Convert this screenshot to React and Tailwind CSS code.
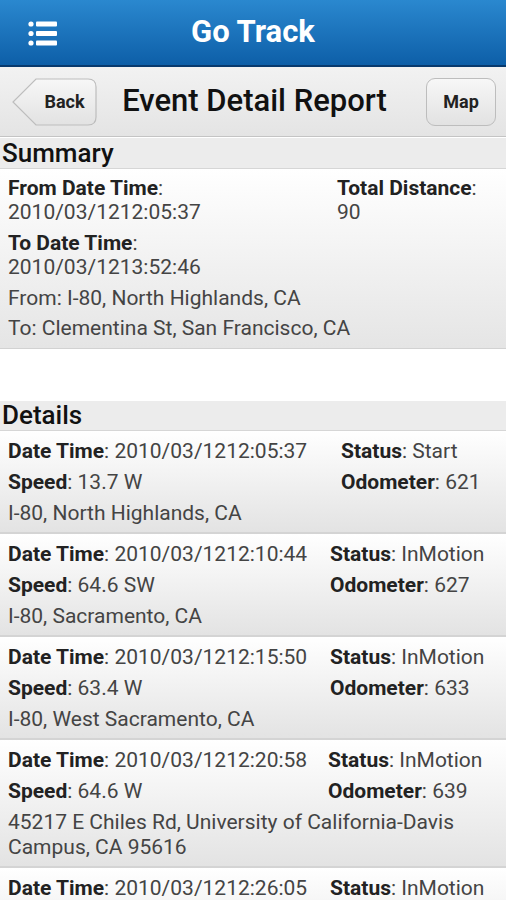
const font = { fontFamily: 'Roboto, "Noto Sans", sans-serif' }

const rows = [
  { dt: '2010/03/1212:05:37', status: 'Start', speed: '13.7 W', odo: '621', addr: ['I-80, North Highlands, CA'], col: 'grid-cols-[333px_1fr]' },
  { dt: '2010/03/1212:10:44', status: 'InMotion', speed: '64.6 SW', odo: '627', addr: ['I-80, Sacramento, CA'], col: 'grid-cols-[322px_1fr]' },
  { dt: '2010/03/1212:15:50', status: 'InMotion', speed: '63.4 W', odo: '633', addr: ['I-80, West Sacramento, CA'], col: 'grid-cols-[322px_1fr]' },
  { dt: '2010/03/1212:20:58', status: 'InMotion', speed: '64.6 W', odo: '639', addr: ['45217 E Chiles Rd, University of California-Davis', 'Campus, CA 95616'], col: 'grid-cols-[320px_1fr]' },
  { dt: '2010/03/1212:26:05', status: 'InMotion', speed: '64.6 W', odo: '645', addr: ['I-80, Davis, CA'], col: 'grid-cols-[322px_1fr]' },
]

function Field({ label, value }) {
  return (
    <div className="whitespace-nowrap">
      <span className="font-bold text-[#222]">{label}</span>
      <span className="text-[#444]">: {value}</span>
    </div>
  )
}

function MenuIcon() {
  return (
    <svg width="30" height="27" viewBox="0 0 30 27">
      <circle cx="3" cy="4" r="2.6" fill="white" />
      <circle cx="3" cy="13.5" r="2.6" fill="white" />
      <circle cx="3" cy="23" r="2.6" fill="white" />
      <rect x="8" y="1.5" width="21" height="5" rx="1" fill="white" />
      <rect x="8" y="11" width="21" height="5" rx="1" fill="white" />
      <rect x="8" y="20.5" width="21" height="5" rx="1" fill="white" />
    </svg>
  )
}

function BackButton() {
  return (
    <button className="relative w-[85px] h-[48px] flex items-center justify-center pl-[22px] pr-[2px]">
      <svg className="absolute inset-0" width="85" height="48" viewBox="0 0 85 48">
        <defs>
          <linearGradient id="bb" x1="0" y1="0" x2="0" y2="1">
            <stop offset="0" stopColor="#f7f7f7" />
            <stop offset="1" stopColor="#e2e2e2" />
          </linearGradient>
        </defs>
        <path d="M24 1 H76 Q84 1 84 9 V39 Q84 47 76 47 H24 L1 24 Z" fill="url(#bb)" stroke="#bdbdbd" strokeWidth="1.2" />
      </svg>
      <span className="relative text-[18px] font-bold text-[#222]">Back</span>
    </button>
  )
}

export default function App() {
  return (
    <div className="w-[506px] h-[900px] bg-white overflow-hidden" style={font}>
      <div className="h-[67px] flex items-center bg-gradient-to-b from-[#2a88cf] to-[#0d5fa8] border-b-2 border-[#083a6e]">
        <div className="w-[86px] flex justify-center pt-[1px]">
          <MenuIcon />
        </div>
        <div className="flex-1 text-center text-white font-bold text-[31px] pr-[86px]">Go Track</div>
      </div>

      <div className="h-[70px] flex items-center pl-[12px] pr-[10px] bg-gradient-to-b from-[#f2f2f2] to-[#e4e4e4] border-b border-[#c4c4c4]">
        <BackButton />
        <div className="flex-1 text-center text-[31px] font-medium text-[#111] pr-[14px] whitespace-nowrap">Event Detail Report</div>
        <button className="w-[70px] h-[48px] rounded-[9px] border border-[#bdbdbd] bg-gradient-to-b from-[#f7f7f7] to-[#e2e2e2] text-[18px] font-bold text-[#222]">Map</button>
      </div>

      <div className="h-[31px] mt-[1px] bg-[#ececec] border-b border-[#d6d6d6] px-[2px] flex items-center text-[26px] font-medium text-[#111]">Summary</div>
      <div className="bg-gradient-to-b from-white to-[#e5e5e5] border-b border-[#d2d2d2] px-[8px] pt-[7px] pb-[8px] text-[21px] leading-[24px]">
        <div className="grid grid-cols-[329px_1fr]">
          <div>
            <div className="font-bold text-[#222]">From Date Time<span className="font-normal text-[#444]">:</span></div>
            <div className="text-[#444]">2010/03/1212:05:37</div>
            <div className="font-bold text-[#222] mt-[7px]">To Date Time<span className="font-normal text-[#444]">:</span></div>
            <div className="text-[#444]">2010/03/1213:52:46</div>
          </div>
          <div>
            <div className="font-bold text-[#222]">Total Distance<span className="font-normal text-[#444]">:</span></div>
            <div className="text-[#444]">90</div>
          </div>
        </div>
        <div className="text-[#444] mt-[7px]">From: I-80, North Highlands, CA</div>
        <div className="text-[#444] mt-[6px]">To: Clementina St, San Francisco, CA</div>
      </div>

      <div className="h-[52px]" />

      <div className="h-[30px] bg-[#ececec] border-b border-[#d6d6d6] px-[2px] flex items-center text-[26px] font-medium text-[#111]">Details</div>
      {rows.map((r, i) => (
        <div key={i} className="bg-gradient-to-b from-white to-[#e3e3e3] border-b-2 border-[#d4d4d4] px-[8px] pt-[5px] pb-[6px] text-[21px] leading-[31px]">
          <div className={`grid ${r.col}`}>
            <Field label="Date Time" value={r.dt} />
            <Field label="Status" value={r.status} />
            <Field label="Speed" value={r.speed} />
            <Field label="Odometer" value={r.odo} />
          </div>
          <div className="text-[#444] leading-[25px] mt-[3px]">
            {r.addr.map((a, j) => <div key={j} className="whitespace-nowrap">{a}</div>)}
          </div>
        </div>
      ))}
    </div>
  )
}
